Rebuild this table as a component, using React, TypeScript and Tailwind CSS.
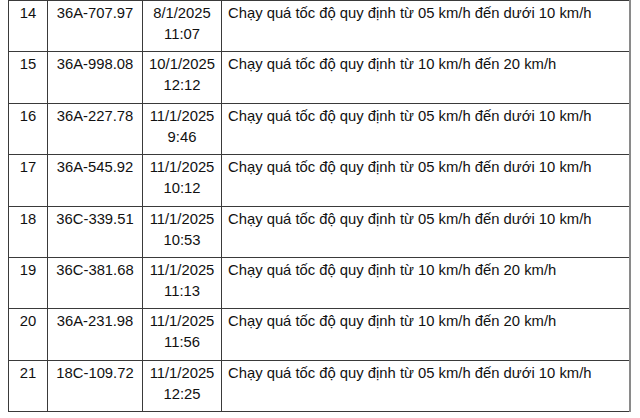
import React from "react";

const rows = [
  ["14", "36A-707.97", "8/1/2025", "11:07", "Chạy quá tốc độ quy định từ 05 km/h đến dưới 10 km/h"],
  ["15", "36A-998.08", "10/1/2025", "12:12", "Chạy quá tốc độ quy định từ 10 km/h đến 20 km/h"],
  ["16", "36A-227.78", "11/1/2025", "9:46", "Chạy quá tốc độ quy định từ 05 km/h đến dưới 10 km/h"],
  ["17", "36A-545.92", "11/1/2025", "10:12", "Chạy quá tốc độ quy định từ 05 km/h đến dưới 10 km/h"],
  ["18", "36C-339.51", "11/1/2025", "10:53", "Chạy quá tốc độ quy định từ 05 km/h đến dưới 10 km/h"],
  ["19", "36C-381.68", "11/1/2025", "11:13", "Chạy quá tốc độ quy định từ 10 km/h đến 20 km/h"],
  ["20", "36A-231.98", "11/1/2025", "11:56", "Chạy quá tốc độ quy định từ 10 km/h đến 20 km/h"],
  ["21", "18C-109.72", "11/1/2025", "12:25", "Chạy quá tốc độ quy định từ 05 km/h đến dưới 10 km/h"],
];

export default function App() {
  return (
    <div className="w-[640px] h-[418px] bg-white overflow-hidden pl-[8px]" style={{ fontFamily: '"Liberation Sans", Arial, sans-serif' }}>
      <table className="border-collapse w-[623px] table-fixed text-[14.8px] leading-[21px] text-[#111]">
        <colgroup>
          <col className="w-[39px]" />
          <col className="w-[95px]" />
          <col className="w-[79px]" />
          <col />
        </colgroup>
        <tbody>
          {rows.map((r) => (
            <tr key={r[0]} className="h-[51.4px]">
              <td className="border border-[#3a3a3a] align-top text-center pt-[2px]">{r[0]}</td>
              <td className="border border-[#3a3a3a] align-top text-center pt-[2px]">{r[1]}</td>
              <td className="border border-[#3a3a3a] align-top text-center pt-[2px]">
                {r[2]}
                <br />
                {r[3]}
              </td>
              <td className="border border-[#3a3a3a] border-r-2 border-r-[#8a8a8a] align-top pt-[2px] pl-[6px] whitespace-nowrap">{r[4]}</td>
            </tr>
          ))}
        </tbody>
      </table>
    </div>
  );
}
